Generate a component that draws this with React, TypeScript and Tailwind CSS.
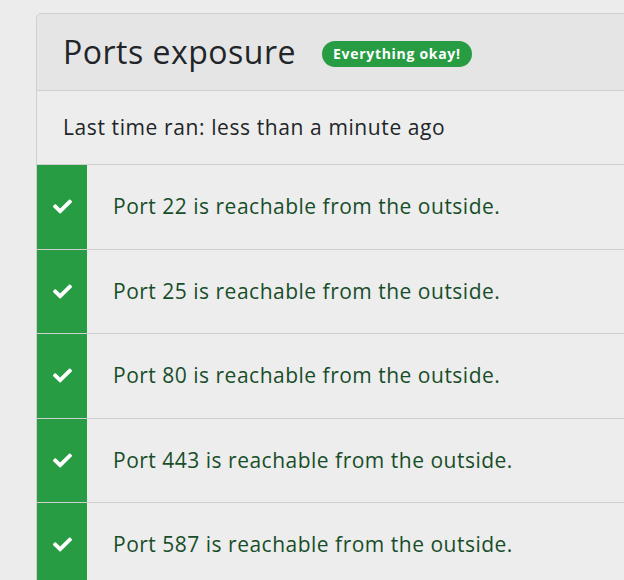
import React from "react";
import { FaCheck } from "react-icons/fa";

const ports = [22, 25, 80, 443, 587];

export default function App() {
  return (
    <div
      className="min-h-[580px] w-[624px] overflow-hidden bg-[#ececec] pt-[13px] pl-[36px]"
      style={{ fontFamily: "'Open Sans', 'Noto Sans', sans-serif" }}
    >
      <div className="w-[640px] rounded-t-[5px] border border-[#d0d0d0] bg-[#ededed]">
        <div className="flex h-[77px] items-center gap-[26px] rounded-t-[5px] border-b border-[#cfcfcf] bg-[#e5e5e5] pl-[26px]">
          <h2 className="text-[32px] leading-none tracking-[0.5px] text-[#212529]">Ports exposure</h2>
          <span className="mt-[4px] rounded-full bg-[#279c43] px-[11px] py-[3px] text-[14px] font-bold leading-[20px] tracking-[0.7px] text-white">
            Everything okay!
          </span>
        </div>
        <div className="flex h-[74px] items-center border-b border-[#cfcfcf] pl-[26px] text-[21px] tracking-[0.6px] text-[#212529]">
          Last time ran: less than a minute ago
        </div>
        {ports.map((p) => (
          <div key={p} className="flex h-[84.5px] border-b border-[#cfcfcf]">
            <div className="flex w-[50px] items-center justify-center bg-[#279c43] text-white">
              <FaCheck size={19} />
            </div>
            <div className="flex items-center pl-[26px] text-[21px] tracking-[0.5px] text-[#184d2a]">
              Port {p} is reachable from the outside.
            </div>
          </div>
        ))}
      </div>
    </div>
  );
}
